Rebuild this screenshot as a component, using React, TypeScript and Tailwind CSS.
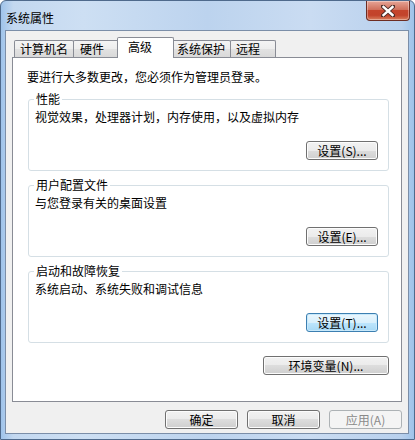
const font = "font-['Noto_Sans_CJK_SC','Liberation_Sans',sans-serif]";

function Btn({
  children,
  kind = "normal",
  className = "",
}: {
  children: React.ReactNode;
  kind?: "normal" | "focus" | "disabled";
  className?: string;
}) {
  const look =
    kind === "focus"
      ? "border-[#3c7fb1] bg-[linear-gradient(#eaf6fd,#d9f0fc_50%,#bee6fd_50%,#a7d9f5)] shadow-[inset_0_0_0_1px_#c8e9fb] text-black"
      : kind === "disabled"
        ? "border-[#adb2b5] bg-[#f4f4f4] text-[#8a8a8a]"
        : "border-[#707070] bg-[linear-gradient(#f2f2f2,#ebebeb_50%,#dddddd_50%,#cfcfcf)] shadow-[inset_0_0_0_1px_#fcfcfc] text-black";
  return (
    <button
      className={`flex h-[19px] items-center justify-center rounded-[3px] border text-[12px] leading-[12px] ${look} ${className}`}
    >
      {children}
    </button>
  );
}

function Group({
  title,
  text,
  button,
  focus,
}: {
  title: string;
  text: string;
  button: string;
  focus?: boolean;
}) {
  return (
    <fieldset className="ml-[15px] mr-[12px] rounded-[3px] border border-[#d5dfe5]">
      <legend className="ml-[5px] px-[2px] text-[12px] leading-[12px]">{title}</legend>
      <div className="flex flex-col pl-[6px] pr-[10px] pt-[6px] pb-[10px]">
        <div className="text-[12px] leading-[12px]">{text}</div>
        <div className="mt-[18px] flex justify-end">
          <Btn kind={focus ? "focus" : "normal"} className="w-[72px]">
            {button}
          </Btn>
        </div>
      </div>
    </fieldset>
  );
}

function Tab({ label, className }: { label: string; className: string }) {
  return (
    <div
      className={`flex h-[17px] items-center rounded-t-[2px] border border-b-0 border-[#898c95] bg-[linear-gradient(#f4f4f4,#ededed_50%,#e2e2e2_50%,#d9d9d9)] pl-[5px] text-[12px] leading-[12px] ${className}`}
    >
      {label}
    </div>
  );
}

export default function App() {
  return (
    <div className={`h-[440px] w-[415px] overflow-hidden bg-white text-black ${font}`}>
      <div className="flex h-[440px] flex-col rounded-t-[6px] border border-[#4f6a8c] bg-[linear-gradient(90deg,#9fc3ea,#c3d8f0_3%,#cddff3_20%,#bcd3ee_50%,#cadcf2_75%,#b8d0ed_97%,#9fc3ea)]">
        {/* TITLE BAR */}
        <div className="flex h-[29px] items-start pl-[5px] pr-[4px]">
          <span className="mt-[10px] text-[12px] leading-[14px]">系统属性</span>
          <div className="ml-auto flex h-[20px] w-[44px] items-center justify-center rounded-b-[4px] border border-t-0 border-[#6d2c22] bg-[linear-gradient(#e6a597,#d0705c_45%,#c4442c_50%,#c2432b_75%,#d9805f)] shadow-[inset_0_0_0_1px_rgba(255,255,255,0.35)]">
            <svg width="14" height="12" viewBox="0 0 14 12">
              <path d="M2 1.5 L12 10.5 M12 1.5 L2 10.5" stroke="#4a2a26" strokeWidth="4.2" strokeLinecap="square" />
              <path d="M2.5 2 L11.5 10 M11.5 2 L2.5 10" stroke="#ffffff" strokeWidth="2.4" strokeLinecap="square" />
            </svg>
          </div>
        </div>

        {/* CLIENT AREA */}
        <div className="ml-[4px] mr-[5px] flex h-[404px] flex-col border border-[#7b8ea8] bg-[#f0f0f0]">
          {/* TABS */}
          <div className="flex h-[26px] items-end pl-[8px] pt-[6px]">
            <Tab label="计算机名" className="w-[60px]" />
            <Tab label="硬件" className="-ml-px w-[47px] pl-[6px]" />
            <div className="relative z-10 -mb-px -ml-[3px] flex h-[21px] w-[57px] items-center rounded-t-[2px] border border-b-0 border-[#898c95] bg-white pb-[3px] pl-[10px] text-[12px] leading-[12px]">
              高级
            </div>
            <Tab label="系统保护" className="-ml-[3px] w-[60px]" />
            <Tab label="远程" className="-ml-px w-[46px]" />
          </div>

          {/* PANEL */}
          <div className="mx-[6px] flex h-[345px] flex-col border border-[#898c95] bg-white">
            <div className="ml-[14px] mt-[13px] text-[12px] leading-[12px]">
              要进行大多数更改，您必须作为管理员登录。
            </div>
            <div className="mt-[10px] flex flex-col gap-[8px]">
              <Group title="性能" text="视觉效果，处理器计划，内存使用，以及虚拟内存" button="设置(S)..." />
              <Group title="用户配置文件" text="与您登录有关的桌面设置" button="设置(E)..." />
              <Group title="启动和故障恢复" text="系统启动、系统失败和调试信息" button="设置(T)..." focus />
            </div>
            <div className="mr-[12px] mt-[13px] flex justify-end">
              <Btn className="w-[126px]">环境变量(N)...</Btn>
            </div>
          </div>

          {/* BOTTOM BUTTONS */}
          <div className="mt-[8px] flex justify-end gap-[9px] pr-[6px]">
            <Btn className="w-[73px]">确定</Btn>
            <Btn className="w-[73px]">取消</Btn>
            <Btn kind="disabled" className="w-[73px]">应用(A)</Btn>
          </div>
        </div>
      </div>
    </div>
  );
}
